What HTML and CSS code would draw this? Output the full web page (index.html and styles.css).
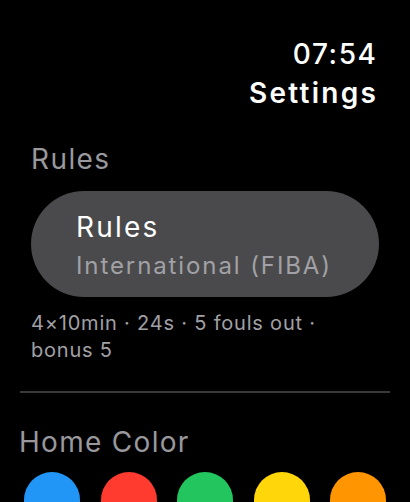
FILE: index.html
```html
<!DOCTYPE html>
<html lang="en">
<head>
<meta charset="utf-8">
<title>Settings</title>
<link rel="stylesheet" href="styles.css">
</head>
<body>
<div class="screen">
  <header class="header">
    <div class="time">07:54</div>
    <div class="title">Settings</div>
  </header>

  <section class="section rules-section">
    <div class="section-label">Rules</div>
    <button class="pill">
      <span class="pill-title">Rules</span>
      <span class="pill-value">International (FIBA)</span>
    </button>
    <p class="footnote">4×10min · 24s · 5 fouls out · bonus 5</p>
  </section>

  <hr class="divider">

  <section class="section color-section">
    <div class="section-label color-label">Home Color</div>
    <div class="swatches">
      <span class="swatch blue"></span>
      <span class="swatch red"></span>
      <span class="swatch green"></span>
      <span class="swatch yellow"></span>
      <span class="swatch orange"></span>
    </div>
  </section>
</div>
</body>
</html>
```

FILE: styles.css
```css
* { box-sizing: border-box; }

html, body {
  margin: 0;
  padding: 0;
  background: #000;
  height: 100%;
  overflow: hidden;
}

body {
  font-family: Inter, "Noto Sans", "Liberation Sans", sans-serif;
  color: #fff;
}

.screen {
  display: flex;
  flex-direction: column;
}

.header {
  display: flex;
  flex-direction: column;
  align-items: flex-end;
  padding: 37px 34px 0 0;
}

.time {
  font-size: 28px;
  line-height: 34px;
  font-weight: 500;
  letter-spacing: 1.6px;
  margin-right: -1.6px;
}

.title {
  font-size: 28px;
  line-height: 34px;
  font-weight: 600;
  letter-spacing: 2.3px;
  margin-right: -2.3px;
  margin-top: 5px;
}

.rules-section {
  padding: 0 31px 0 31px;
  margin-top: 32px;
}

.section-label {
  font-size: 28px;
  line-height: 34px;
  color: #98989d;
  letter-spacing: 1.4px;
}

.pill {
  display: flex;
  flex-direction: column;
  align-items: flex-start;
  width: 100%;
  margin-top: 15px;
  padding: 19px 20px 16px 45px;
  border: 0;
  border-radius: 53px;
  background: #4a4a4c;
  font-family: inherit;
  text-align: left;
  height: 106px;
}

.pill-title {
  font-size: 28px;
  line-height: 34px;
  color: #fff;
  letter-spacing: 2.2px;
}

.pill-value {
  font-size: 24px;
  line-height: 30px;
  margin-top: 7px;
  color: #a1a1a6;
  letter-spacing: 1.9px;
}

.footnote {
  margin: 13px 0 0 0;
  font-size: 20px;
  line-height: 27px;
  color: #a1a1a6;
  letter-spacing: 0.8px;
  padding-right: 10px;
}

.divider {
  margin: 27px 20px 0 20px;
  border: 0;
  height: 2px;
  background: #3a3a3c;
}

.color-section {
  padding: 0 20px 0 19px;
  margin-top: 32px;
}

.color-label {
  letter-spacing: 1.3px;
}

.swatches {
  display: flex;
  gap: 20.5px;
  padding-left: 5px;
  margin-top: 13px;
}

.swatch {
  width: 56px;
  height: 56px;
  border-radius: 50%;
  flex: none;
}

.blue { background: #2196f7; }
.red { background: #ff3b30; }
.green { background: #22c55e; }
.yellow { background: #ffd60a; }
.orange { background: #ff9500; }
```
